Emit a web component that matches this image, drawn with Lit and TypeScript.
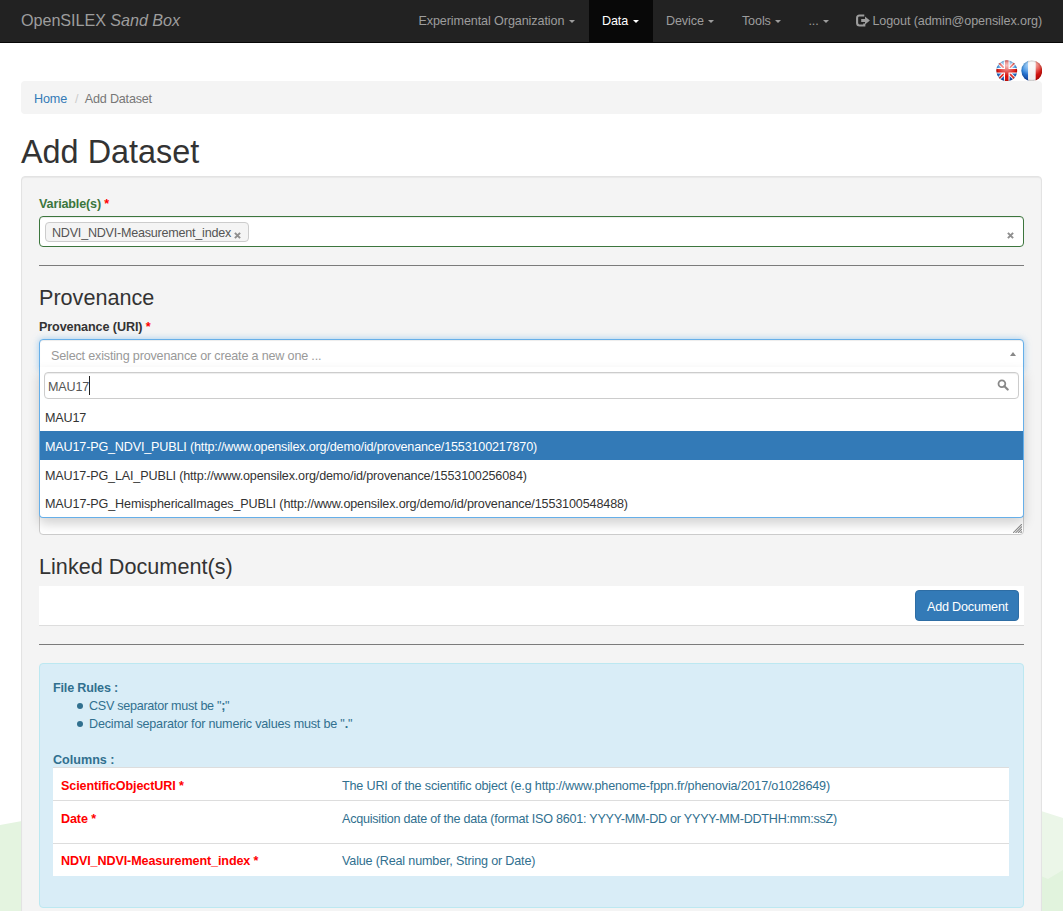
import { LitElement, html, css, svg } from "lit";
import { customElement, property } from "lit/decorators.js";

interface MenuItem { label: string; cls: string; }
interface Option { label: string; cls: string; }
interface ColumnRule { name: string; text: string; cls: string; }

const MENU: MenuItem[] = [
  { label: "Experimental Organization", cls: "w-exp" },
  { label: "Data", cls: "w-data active" },
  { label: "Device", cls: "w-device" },
  { label: "Tools", cls: "w-tools" },
  { label: "...", cls: "w-more" },
];

const OPTIONS: Option[] = [
  { label: "MAU17", cls: "o1" },
  { label: "MAU17-PG_NDVI_PUBLI (http://www.opensilex.org/demo/id/provenance/1553100217870)", cls: "o2 on" },
  { label: "MAU17-PG_LAI_PUBLI (http://www.opensilex.org/demo/id/provenance/1553100256084)", cls: "o3" },
  { label: "MAU17-PG_HemisphericalImages_PUBLI (http://www.opensilex.org/demo/id/provenance/1553100548488)", cls: "o4" },
];

const COLUMNS: ColumnRule[] = [
  { name: "ScientificObjectURI", text: "The URI of the scientific object (e.g http://www.phenome-fppn.fr/phenovia/2017/o1028649)", cls: "r1" },
  { name: "Date", text: "Acquisition date of the data (format ISO 8601: YYYY-MM-DD or YYYY-MM-DDTHH:mm:ssZ)", cls: "r2" },
  { name: "NDVI_NDVI-Measurement_index", text: "Value (Real number, String or Date)", cls: "r3" },
];

@customElement("nav-bar")
export class NavBar extends LitElement {
  static styles = css`
    :host { display: block; }
    .bar { display: flex; height: 42px; background: #222; border-bottom: 1px solid #080808; color: #9d9d9d; padding: 0 21px; justify-content: space-between; line-height: 18px; white-space: nowrap; letter-spacing: -0.1px; }
    .brand { font-size: 16.2px; padding-top: 11px; letter-spacing: -0.07px; }
    .menu { display: flex; }
    .item { display: flex; align-items: center; box-sizing: border-box; padding-left: 13px; height: 42px; }
    .active { background: #080808; color: #fff; }
    .w-exp { width: 183.5px; } .w-data { width: 64px; } .w-device { width: 76px; } .w-tools { width: 66.5px; } .w-more { width: 47px; }
    .caret { width: 0; height: 0; margin: 1px 0 0 4.5px; border: 3px solid transparent; border-top-color: currentColor; border-bottom: 0; }
    .logout { display: flex; align-items: center; height: 42px; gap: 2px; padding-left: 14px; }
    .logout svg { width: 14px; height: 13px; margin-top: -2px; }
  `;
  render() {
    return html`<nav class="bar">
      <div class="brand">OpenSILEX <i>Sand Box</i></div>
      <div class="menu">
        ${MENU.map((m) => html`<div class="item ${m.cls}"><span>${m.label}</span><span class="caret"></span></div>`)}
        <div class="logout">
          <svg viewBox="0 0 14 13"><path d="M8.3 1.5H3.6Q1.1 1.5 1.1 4V9Q1.1 11.5 3.6 11.5H8.3V9.6" fill="none" stroke="#9d9d9d" stroke-width="2.1"/><path d="M5.2 5H9V2.4L13.9 6.5L9 10.6V8H5.2Z" fill="#9d9d9d"/></svg>
          <span>Logout (admin@opensilex.org)</span>
        </div>
      </div>
    </nav>`;
  }
}

@customElement("flag-icon")
export class FlagIcon extends LitElement {
  @property() country = "fr";
  static styles = css`
    :host { display: block; width: 21.5px; height: 21.5px; }
    svg { display: block; width: 21.5px; height: 21.5px; }
  `;
  render() {
    const uk = svg`<rect width="22" height="22" fill="url(#b)"/>
      <path d="M2 2L20 20M20 2L2 20" stroke="#fff" stroke-width="3.6"/>
      <path d="M2 2L20 20M20 2L2 20" stroke="#e0302a" stroke-width="1.7"/>
      <path d="M11 0V22M0 11H22" stroke="#fff" stroke-width="5.8"/>
      <path d="M11 0V22M0 11H22" stroke="#d8100c" stroke-width="3.6"/>`;
    const fr = svg`<rect width="8" height="22" fill="url(#b)"/><rect x="7.2" width="7.8" height="22" fill="#f0f0f0"/><rect x="15" width="8" height="22" fill="url(#r)"/>`;
    return html`<svg viewBox="0 0 22 22">
      <defs>
        <clipPath id="c"><circle cx="11" cy="11" r="10.7"/></clipPath>
        <linearGradient id="b" x2="0" y2="1"><stop offset="0" stop-color="#5fb0f5"/><stop offset=".5" stop-color="#2f86e0"/><stop offset="1" stop-color="#0f3c9c"/></linearGradient>
        <linearGradient id="r" x2="0" y2="1"><stop offset="0" stop-color="#f0705f"/><stop offset=".5" stop-color="#d81812"/><stop offset="1" stop-color="#b80808"/></linearGradient>
        <radialGradient id="g" cx=".5" cy=".25" r=".5"><stop offset="0" stop-color="#fff" stop-opacity=".75"/><stop offset="1" stop-color="#fff" stop-opacity="0"/></radialGradient>
        <radialGradient id="e"><stop offset=".8" stop-color="#000" stop-opacity="0"/><stop offset="1" stop-color="#000" stop-opacity=".2"/></radialGradient>
      </defs>
      <g clip-path="url(#c)">${this.country === "uk" ? uk : fr}<rect width="22" height="22" fill="url(#g)"/><circle cx="11" cy="11" r="10.7" fill="url(#e)"/></g>
    </svg>`;
  }
}

@customElement("provenance-select")
export class ProvenanceSelect extends LitElement {
  static styles = css`
    :host { display: block; position: relative; height: 31px; }
    .box { box-sizing: border-box; display: flex; justify-content: space-between; height: 31px; padding: 7px 7px 0 11px; background: #fff; color: #999; border: 1px solid #66afe9; border-radius: 4px 4px 0 0; box-shadow: inset 0 1px 1px rgba(0,0,0,.075), 0 0 7px rgba(102,175,233,.6); line-height: 18px; letter-spacing: -0.18px; }
    .arrow { width: 0; height: 0; margin-top: 5px; border: 3px solid transparent; border-bottom: 4px solid #888; border-top: 0; }
    .drop { position: absolute; z-index: 2; top: 28px; left: 0; right: 0; height: 151px; box-sizing: border-box; background: #fff; border: 1px solid #66afe9; border-top: 0; border-radius: 0 0 4px 4px; box-shadow: 0 6px 12px rgba(0,0,0,.175); color: #333; }
    .search { box-sizing: border-box; display: flex; justify-content: space-between; height: 27px; margin: 5px 4px 3.2px; padding: 4px 9px 0 3px; border: 1px solid #ccc; border-radius: 4px; box-shadow: inset 0 1px 1px rgba(0,0,0,.075); line-height: 18px; color: #555; }
    .typed { border-right: 1px solid #222; height: 19px; margin-top: -1px; padding-top: 2px; box-sizing: border-box; letter-spacing: -0.2px; }
    .search svg { width: 12px; height: 12px; margin-top: 2px; }
    .opt { box-sizing: border-box; height: 28.8px; padding: 6.9px 5px 0; line-height: 18px; white-space: nowrap; }
    .o1 { letter-spacing: -0.2px; }
    .o2 { letter-spacing: -0.17px; }
    .o3 { letter-spacing: -0.16px; }
    .o4 { letter-spacing: -0.144px; }
    .on { background: #337ab7; color: #fff; }
  `;
  render() {
    return html`<div class="box"><span>Select existing provenance or create a new one ...</span><span class="arrow"></span></div>
      <div class="drop">
        <div class="search"><span class="typed">MAU17</span>
          <svg viewBox="0 0 12 12" fill="none" stroke="#888"><circle cx="4.9" cy="4.7" r="3.4" stroke-width="1.8"/><path d="M7.4 7.3L10.7 10.6" stroke-width="2.1" stroke-linecap="round"/></svg>
        </div>
        ${OPTIONS.map((o) => html`<div class="opt ${o.cls}">${o.label}</div>`)}
      </div>`;
  }
}

@customElement("app-root")
export class AppRoot extends LitElement {
  static styles = css`
    :host { display: block; position: relative; height: 911px; overflow: hidden; background: #fff; color: #333; font: 12.6px/18px "Liberation Sans", Arial, sans-serif; }
    .backdrop { position: absolute; left: 0; top: 800px; width: 1063px; height: 111px; }
    .page { position: relative; padding: 0 21px; }
    .flags { display: flex; justify-content: flex-end; gap: 3px; height: 21.5px; padding-top: 16.5px; }
    .crumbs { display: flex; box-sizing: border-box; height: 33px; padding: 9px 13px; background: #f4f4f4; border-radius: 4px; color: #777; letter-spacing: -0.2px; }
    .link { color: #337ab7; letter-spacing: -0.15px; }
    .sep { color: #ccc; padding: 0 6.5px 0 8px; }
    h1 { font-size: 32.4px; line-height: 36px; font-weight: 400; margin: 20px 0 6px; }
    .well { background: #f4f4f4; border: 1px solid #e3e3e3; border-radius: 4px; box-shadow: inset 0 1px 1px rgba(0,0,0,.05); padding: 18px 17px; height: 760px; }
    .label { font-weight: 700; height: 18px; margin-bottom: 3px; letter-spacing: -0.1px; }
    .ok { color: #3c763d; letter-spacing: -0.16px; }
    .req { color: #f00; }
    .multi { box-sizing: border-box; display: flex; justify-content: space-between; height: 31px; padding: 5px 9px 0 5px; background: #fff; border: 1px solid #3c763d; border-radius: 4px; box-shadow: inset 0 1px 1px rgba(0,0,0,.075); }
    .chip { box-sizing: border-box; display: flex; justify-content: space-between; width: 204px; height: 20px; padding: 1px 7px 0 6px; background: #f4f4f4; border: 1px solid #ccc; border-radius: 4px; color: #555; white-space: nowrap; letter-spacing: -0.24px; }
    .x { flex: none; width: 7px; height: 7px; }
    .chip .x { margin: 8px 0 0; }
    .multi > .x { margin: 10px 0 0; }
    .rule { height: 1px; background: #7b7b7b; margin: 18px 0; }
    h3 { font-size: 21.6px; line-height: 24px; height: 24px; font-weight: 400; margin: 20px 0 8px; }
    .area { box-sizing: border-box; display: flex; justify-content: flex-end; align-items: flex-end; height: 60px; margin: 105px 0 20px; padding: 1px; border: 1px solid #ccc; border-radius: 4px; background: #fff; }
    .grip { width: 9px; height: 9px; }
    h3.linked { height: 23px; letter-spacing: 0.03px; }
    .docs { box-sizing: border-box; display: flex; justify-content: flex-end; height: 40px; padding: 4px 5px; background: #fff; border-bottom: 1px solid #ddd; }
    .btn { box-sizing: border-box; width: 104px; height: 31px; padding: 7px 0 0 1px; text-align: center; background: #337ab7; border: 1px solid #2e6da4; border-radius: 4px; color: #fff; letter-spacing: -0.18px; }
    .alert { box-sizing: border-box; height: 245px; padding: 15px 14px 0 13px; background: #d9edf7; border: 1px solid #bce8f1; border-radius: 4px; color: #31708f; }
    .rules { letter-spacing: -0.17px; }
    ul { list-style: none; margin: 0 0 18px; padding: 0 0 0 24px; }
    li { display: flex; align-items: center; height: 18px; white-space: pre; letter-spacing: -0.2px; }
    li:first-child { letter-spacing: -0.29px; }
    li::before { content: ""; width: 6px; height: 6px; border-radius: 50%; background: currentColor; margin: -1px 6px 0 0; }
    .cols { height: 16px; }
    .row { box-sizing: border-box; display: flex; height: 33px; padding: 9px 8px 0; background: #fff; border-top: 1px solid #ddd; white-space: nowrap; }
    .r1 { letter-spacing: -0.175px; }
    .r2 { height: 43px; letter-spacing: -0.245px; }
    .r3 { padding-top: 8px; letter-spacing: -0.17px; }
    .name { width: 281px; color: #f00; font-weight: 700; letter-spacing: -0.12px; }
  `;
  private cross() {
    return html`<svg class="x" viewBox="0 0 7 7"><path d="M.9 .9L6.1 6.1M6.1 .9L.9 6.1" stroke="#8f8f8f" stroke-width="2"/></svg>`;
  }
  render() {
    return html`
      <svg class="backdrop" viewBox="0 0 1063 111"><path d="M0 25L22 21V111H0Z" fill="#e4f4e0"/><path d="M1041 11L1063 18V111H1041Z" fill="#ebf6e8"/><path d="M1041 76L1048 79L1063 70V111H1041Z" fill="#e1f3dd"/></svg>
      <nav-bar></nav-bar>
      <div class="page">
        <div class="flags"><flag-icon country="uk"></flag-icon><flag-icon country="fr"></flag-icon></div>
        <div class="crumbs"><span class="link">Home</span><span class="sep">/</span><span>Add Dataset</span></div>
        <h1>Add Dataset</h1>
        <div class="well">
          <div class="label ok">Variable(s) <span class="req">*</span></div>
          <div class="multi"><div class="chip"><span>NDVI_NDVI-Measurement_index</span>${this.cross()}</div>${this.cross()}</div>
          <div class="rule"></div>
          <h3>Provenance</h3>
          <div class="label">Provenance (URI) <span class="req">*</span></div>
          <provenance-select></provenance-select>
          <div class="area"><svg class="grip" viewBox="0 0 9 9"><path d="M0 9L9 0M2.5 9L9 2.5M5 9L9 5M7.5 9L9 7.5" stroke="#8c8c8c" stroke-width="1.1"/></svg></div>
          <h3 class="linked">Linked Document(s)</h3>
          <div class="docs"><div class="btn">Add Document</div></div>
          <div class="rule"></div>
          <div class="alert">
            <b class="rules">File Rules :</b>
            <ul><li>CSV separator must be "<b>;</b>"</li><li>Decimal separator for numeric values must be "<b>.</b>"</li></ul>
            <div class="cols"><b>Columns :</b></div>
            ${COLUMNS.map((c) => html`<div class="row ${c.cls}"><span class="name">${c.name} *</span><span>${c.text}</span></div>`)}
          </div>
        </div>
      </div>`;
  }
}
